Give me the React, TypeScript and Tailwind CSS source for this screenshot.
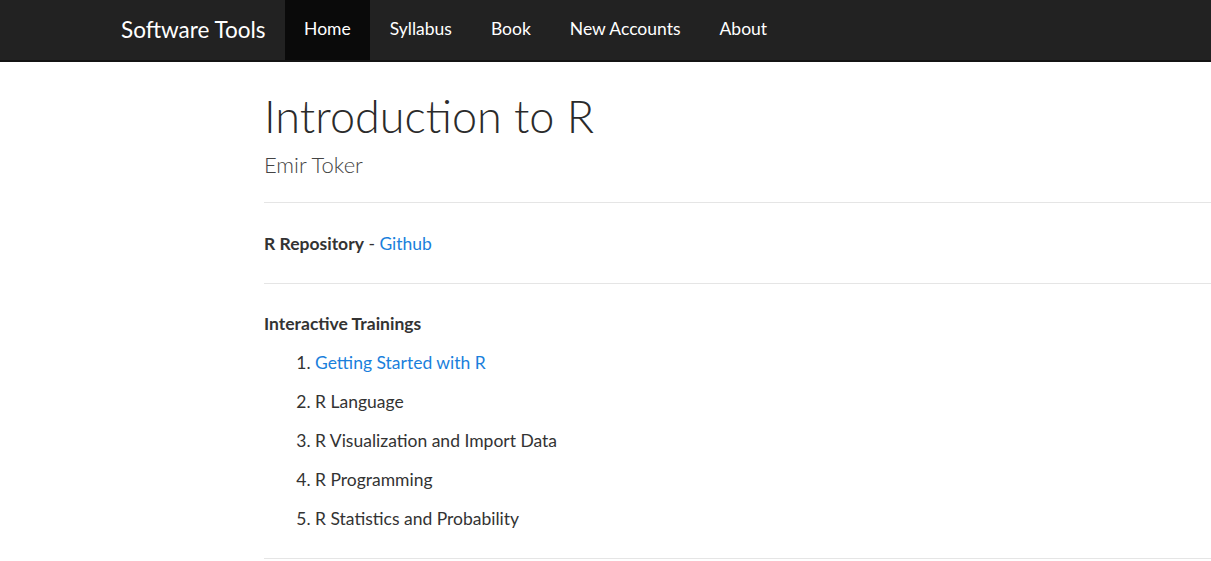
const NAV_ITEMS = ["Home", "Syllabus", "Book", "New Accounts", "About"];

const TRAININGS = [
  { title: "Getting Started with R", link: true },
  { title: "R Language", link: false },
  { title: "R Visualization and Import Data", link: false },
  { title: "R Programming", link: false },
  { title: "R Statistics and Probability", link: false },
];

function Navbar() {
  return (
    <nav className="h-[62px] bg-[#222222] border-b-2 border-[#141414] flex items-stretch">
      <a href="#" className="pl-[121px] pr-[19px] pb-[1px] flex items-center text-[22.5px] text-white">
        Software Tools
      </a>
      <ul className="flex items-stretch">
        {NAV_ITEMS.map((item, i) => (
          <li key={item} className="flex">
            <a
              href="#"
              className={`px-[19.5px] pb-[1px] flex items-center text-[17.5px] text-white ${
                i === 0 ? "bg-[#0a0a0a]" : ""
              }`}
            >
              {item}
            </a>
          </li>
        ))}
      </ul>
    </nav>
  );
}

export default function App() {
  return (
    <div className="min-h-screen bg-white text-[#333333] font-['Lato','Open_Sans',sans-serif]">
      <Navbar />
      <main className="ml-[264px]">
        <h1 className="mt-[23px] text-[45px] leading-[62px] font-light text-[#2b2b2b]">
          Introduction to R
        </h1>
        <p className="mt-[3px] text-[22px] leading-[30px] font-light text-[#444444]">Emir Toker</p>
        <hr className="mt-[22px] border-t border-[#e5e5e5]" />

        <p className="mt-[28px] text-[17.5px] leading-[26px]">
          <strong className="font-bold">R Repository</strong> -{" "}
          <a href="#" className="text-[#1a7fdc]">
            Github
          </a>
        </p>
        <hr className="mt-[26px] border-t border-[#e5e5e5]" />

        {/* Interactive Trainings */}
        <h3 className="mt-[27px] text-[17.5px] leading-[26px] font-bold">Interactive Trainings</h3>
        <ol className="mt-[6px] pl-[51px] list-decimal text-[17.5px] leading-[39px]">
          {TRAININGS.map((t) => (
            <li key={t.title}>
              {t.link ? (
                <a href="#" className="text-[#1a7fdc]">
                  {t.title}
                </a>
              ) : (
                t.title
              )}
            </li>
          ))}
        </ol>
        <hr className="mt-[20px] border-t border-[#e5e5e5]" />
      </main>
    </div>
  );
}
